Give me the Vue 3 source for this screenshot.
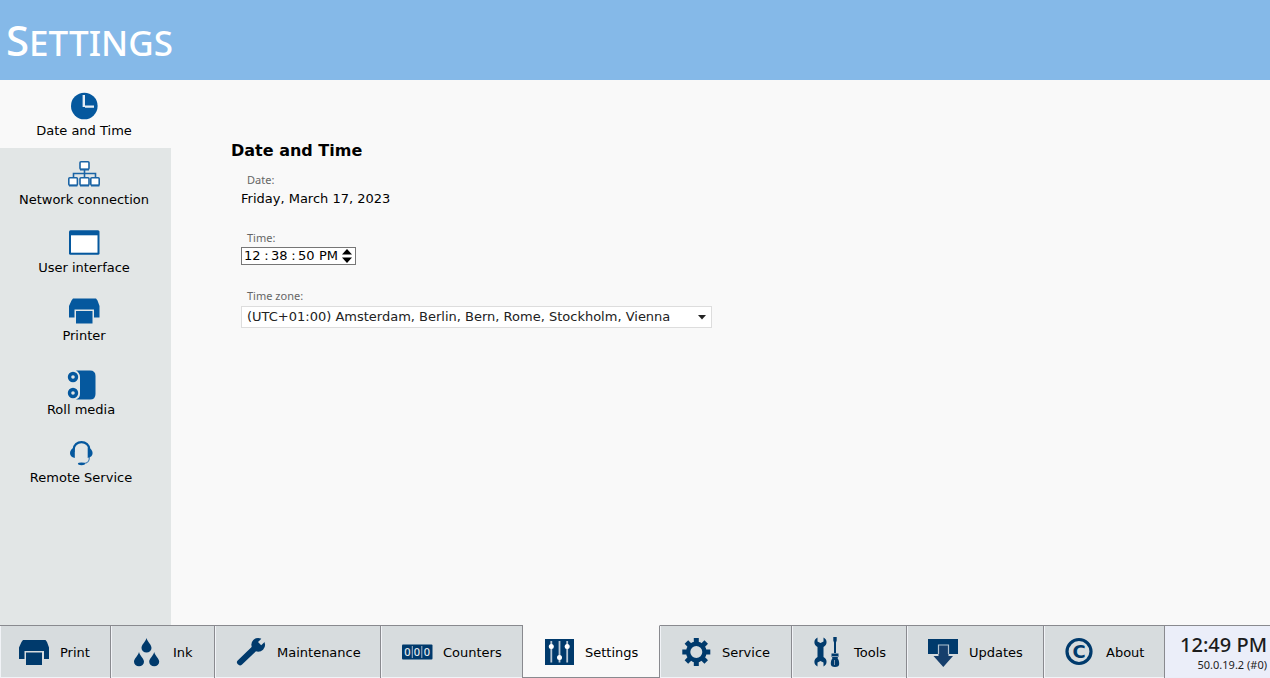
<script setup>
import { ref } from 'vue'

const hours = ref('12')
const minutes = ref('38')
const seconds = ref('50')
const period = ref('PM')
const zone = ref('(UTC+01:00) Amsterdam, Berlin, Bern, Rome, Stockholm, Vienna')

const tabs = ['Print', 'Ink', 'Maintenance', 'Counters', 'Settings', 'Service', 'Tools', 'Updates', 'About']
const active = ref('Settings')

const pages = [
  { name: 'Date and Time', group: 'general' },
  { name: 'Network connection', group: 'general' },
  { name: 'User interface', group: 'general' },
  { name: 'Printer', group: 'general' },
  { name: 'Roll media', group: 'extra' },
  { name: 'Remote Service', group: 'extra' }
]
const page = ref('Date and Time')

const teeth = [0, 45, 90, 135, 180, 225, 270, 315]
</script>

<template>
  <div class="app">
    <header class="banner"><h1>Settings</h1></header>

    <div class="body">
      <nav class="side" aria-label="Settings pages">
        <button
          v-for="p in pages"
          :key="p.name"
          type="button"
          class="side-item"
          :class="[p.group, { current: p.name === page }]"
          @click="page = p.name"
        >
          <svg class="icon" viewBox="0 0 32 32" aria-hidden="true">
            <g v-if="p.name === 'Date and Time'">
              <circle cx="16.3" cy="16" r="13.3" fill="#05589e" />
              <path d="M15.8 5v12M17 16.6h9" stroke="#e4edf5" stroke-width="2.4" fill="none" />
            </g>
            <g v-else-if="p.name === 'Network connection'" stroke="#1b64a5" stroke-width="1.6" fill="#fff">
              <path d="M16.5 10v9M5.500 19v-4.500h22v4.500" fill="none" />
              <rect x="12" y="2.700" width="9" height="7.600" rx="1" />
              <rect x="0.800" y="18.700" width="8.600" height="7.600" rx="1" />
              <rect x="12" y="18.700" width="9" height="7.600" rx="1" />
              <rect x="22.800" y="18.700" width="8.400" height="7.600" rx="1" />
              <path d="M12 10.600h9M1 26.700h8.400M12 26.700h9M23 26.700h8.400" stroke-width="1.800" />
            </g>
            <g v-else-if="p.name === 'User interface'">
              <rect x="1" y="3.300" width="30.500" height="24.400" rx="1.500" fill="#05589e" />
              <rect x="3" y="8.300" width="26.500" height="17.400" fill="#fff" />
            </g>
            <g v-else-if="p.name === 'Printer'" fill="#05589e">
              <path d="M5 3.500h23l1.500 2L31.500 11v11.500H26V14.500H6.500v8H1V11l2.500-5.500z" />
              <path d="M8 16h16.500v12.500H8z" />
            </g>
            <g v-else-if="p.name === 'Roll media'" fill="#05589e">
              <path d="M11 1.500h14q5.500 0 5.500 5.500v18q0 5.500-5.500 5.500H11q4-1.500 4-5.500V8q0-4-4-6.500z" />
              <circle cx="8" cy="8" r="3.500" fill="none" stroke="#05589e" stroke-width="3.400" />
              <circle cx="8" cy="24" r="3.500" fill="none" stroke="#05589e" stroke-width="3.400" />
            </g>
            <g v-else fill="#05589e">
              <path d="M8.500 15v-2C8.500 2.500 24.500 2.500 24.500 13v2" fill="none" stroke="#05589e" stroke-width="2.200" />
              <path d="M9.800 10.500v10.500C6.500 20.500 5 18.500 5 16s2-4.800 4.800-5.500zM22.700 10.500v10.500c3.300-.5 4.900-2.500 4.900-5s-2-4.800-4.900-5.500z" />
              <path d="M24.400 20c0 4.500-1.500 6.300-6 6.500" fill="none" stroke="#3f7db5" stroke-width="1.200" />
              <ellipse cx="16.500" cy="26.800" rx="3.600" ry="1.400" />
            </g>
          </svg>
          <span>{{ p.name }}</span>
        </button>
      </nav>

      <main class="content">
        <h2>Date and Time</h2>
        <div class="field">
          <span class="caption">Date:</span>
          <span class="value">Friday, March 17, 2023</span>
        </div>
        <div class="field">
          <label class="caption" for="hours">Time:</label>
          <div class="time">
            <input id="hours" v-model="hours" class="part" type="text" maxlength="2" />
            <span class="colon">:</span>
            <input v-model="minutes" class="part" type="text" maxlength="2" aria-label="Minutes" />
            <span class="colon">:</span>
            <input v-model="seconds" class="part" type="text" maxlength="2" aria-label="Seconds" />
            <input v-model="period" class="part period" type="text" maxlength="2" aria-label="AM or PM" />
            <span class="spin">
              <button type="button" aria-label="Later">
                <svg viewBox="0 0 10 6"><path d="M5 0l5 5.500H0z" /></svg>
              </button>
              <button type="button" aria-label="Earlier">
                <svg viewBox="0 0 10 6"><path d="M0 .5h10L5 6z" /></svg>
              </button>
            </span>
          </div>
        </div>
        <div class="field">
          <label class="caption" for="zone">Time zone:</label>
          <div class="zone">
            <select id="zone" v-model="zone">
              <option>(UTC+01:00) Amsterdam, Berlin, Bern, Rome, Stockholm, Vienna</option>
            </select>
            <svg class="caret" viewBox="0 0 8 5" aria-hidden="true"><path d="M0 0h8L4 4.500z" fill="#222" /></svg>
          </div>
        </div>
      </main>
    </div>

    <footer class="bar">
      <button
        v-for="t in tabs"
        :key="t"
        type="button"
        class="tab"
        :class="{ current: t === active }"
        @click="active = t"
      >
        <svg class="icon" viewBox="0 0 32 32" aria-hidden="true" fill="#003a6c">
          <g v-if="t === 'Print'">
            <path d="M5 4h22.500l1.500 2L31 11.500V23h-5V15H6.500v8H1V11.500L3.500 6z" />
            <path d="M8 16.500h16V29H8z" />
          </g>
          <g v-else-if="t === 'Ink'">
            <path d="M15.500 2C14.500 6 10.500 8.500 10.500 12a5 4.600 0 0 0 10 0C20.500 8.500 16.500 6 15.500 2z" />
            <path d="M8 16C7 20 3 22.500 3 25.700a5 4.600 0 0 0 10 0C13 22.500 9 20 8 16z" />
            <path d="M23.200 16c-1 4-5 6.500-5 9.700a5 4.600 0 0 0 10 0C28.200 22.500 24.200 20 23.200 16z" />
          </g>
          <g v-else-if="t === 'Maintenance'">
            <path d="M5 26.300L20 12" stroke="#003a6c" stroke-width="6" stroke-linecap="round" />
            <circle cx="23.200" cy="8.800" r="6.900" />
            <path d="M24.600 7.600L31.500 1" stroke="#d7dcde" stroke-width="4.600" />
          </g>
          <g v-else-if="t === 'Counters'">
            <rect x="1" y="8.500" width="30.500" height="15" rx="1" />
            <path d="M11.300 10v12M20.800 10v12" stroke="#a9bacb" stroke-width="1" />
            <g class="digits" fill="#e5ebf0" text-anchor="middle">
              <text x="6.500" y="19.500">0</text>
              <text x="16" y="19.500">0</text>
              <text x="25.800" y="19.500">0</text>
            </g>
          </g>
          <g v-else-if="t === 'Settings'">
            <rect x="2" y="3" width="29" height="26" />
            <path d="M8.300 5v21.500M16.500 5v21.500M24.200 5v21.500" stroke="#b8c7d5" stroke-width="1.800" />
            <g fill="#fff"><circle cx="8.300" cy="10.500" r="2.500" /><circle cx="16.500" cy="21.500" r="2.500" /><circle cx="24.200" cy="10.500" r="2.500" /></g>
          </g>
          <g v-else-if="t === 'Service'">
            <circle cx="16.300" cy="16" r="8.200" fill="none" stroke="#003a6c" stroke-width="4.400" />
            <rect v-for="a in teeth" :key="a" x="13.800" y="2" width="5" height="5" :transform="`rotate(${a} 16.300 16)`" />
          </g>
          <g v-else-if="t === 'Tools'">
            <path d="M5.500 1.500v4l3 1.500 3-1.500v-4c4.200 2 4 7.500 0 9.500v10c4 2 4.200 7.500 0 9.500v-4l-3-1.500-3 1.500v4c-4.200-2-4-7.500 0-9.500V11c-4-2-4.200-7.500 0-9.500z" />
            <path d="M21.300 1h3.400v3.500l-.7 2V17h-2V6.500l-.7-2z" />
            <path d="M19.500 17.500h7v3l-1 1.500c1.300 2 1.700 3.500 1.700 6 0 2-1.500 3-4.200 3s-4.200-1-4.200-3c0-2.500.4-4 1.700-6l-1-1.500z" />
            <path d="M20 20.500h6M22.500 24v5" stroke="#8098b0" stroke-width="1" />
          </g>
          <g v-else-if="t === 'Updates'">
            <rect x="1" y="3" width="30" height="15" />
            <path d="M11.500 9.500h10v10.500H26L16.300 31 6.500 20h5z" fill="#163f6c" />
            <path d="M11.500 18V9h10v9" fill="none" stroke="#b4c3d0" stroke-width="1.200" />
          </g>
          <g v-else>
            <circle cx="15" cy="15.500" r="12" fill="none" stroke="#003a6c" stroke-width="3.200" />
            <text class="copy" x="15" y="22" text-anchor="middle">C</text>
          </g>
        </svg>
        <span>{{ t }}</span>
      </button>
      <div class="status">
        <time>12:49 PM</time>
        <small>50.0.19.2 (#0)</small>
      </div>
    </footer>
  </div>
</template>

<style>
body {
  margin: 0;
}
</style>

<style scoped>
.app {
  display: flex;
  flex-direction: column;
  min-height: 100vh;
  background: #f9f9f9;
  color: #000;
  font: 13px/18px Verdana, "DejaVu Sans", sans-serif;
}
button,
input,
select {
  margin: 0;
  padding: 0;
  border: 0;
  background: none;
  color: inherit;
  font: inherit;
}
.icon {
  display: block;
  flex: none;
  width: 32px;
  height: 32px;
}
.banner {
  display: flex;
  align-items: center;
  height: 78px;
  padding: 2px 6px 0;
  background: #85b9e8;
  color: #fff;
}
h1 {
  margin: 0;
  font: 500 35px/48px "Noto Sans", sans-serif;
  text-transform: uppercase;
}
h1::first-letter {
  font-size: 42px;
}
.body {
  display: flex;
  flex: 1;
}
.side {
  display: flex;
  flex-direction: column;
  width: 171px;
  background: #e2e6e6;
}
.side-item {
  display: flex;
  flex-direction: column;
  align-items: center;
  height: 68px;
  padding: 10px 3px 0 0;
  white-space: nowrap;
}
.side-item.current {
  background: #f9f9f9;
  margin-bottom: 1px;
}
.side-item.extra {
  padding-right: 9px;
}
.general + .extra {
  margin-top: 6px;
}
.content {
  flex: 1;
  padding: 59px 60px 0;
}
h2 {
  margin: 0 0 10px;
  font-size: 16px;
  line-height: 24px;
}
.field {
  display: flex;
  flex-direction: column;
  align-items: flex-start;
  height: 58px;
  padding-left: 10px;
}
.caption {
  padding-left: 6px;
  color: #666;
  font: 11px/14px "Noto Sans", sans-serif;
}
.value {
  margin-top: 3px;
}
.time {
  display: flex;
  align-items: center;
  margin-top: 2px;
  padding: 0 3px 0 2px;
  border: 1px solid #767676;
  background: #fff;
}
.part {
  width: 18px;
  height: 16px;
}
.period {
  width: 21px;
  margin-left: 3px;
}
.colon {
  width: 9px;
  line-height: 16px;
  text-align: center;
}
.spin {
  display: flex;
  flex-direction: column;
  gap: 2px;
  margin-left: 2px;
}
.spin button,
.spin svg {
  display: block;
  width: 10px;
  height: 6px;
}
.zone {
  position: relative;
  margin-top: 3px;
}
select {
  appearance: none;
  display: block;
  height: 22px;
  padding: 0 40px 0 5px;
  border: 1px solid #ddd;
  background: #fff;
  color: #222;
}
.caret {
  position: absolute;
  top: 9px;
  right: 6px;
  width: 8px;
  height: 5px;
}
.bar {
  display: grid;
  grid-template-columns: 111fr 104fr 166fr 142fr 137fr 132fr 115fr 137fr 121fr 105fr;
  height: 53px;
}
.tab {
  display: flex;
  align-items: center;
  gap: 10px;
  padding: 0 0 0 20px;
  border-top: 1px solid #898a8f;
  border-right: 1px solid #898a8f;
  background: #d7dcde;
  box-shadow: inset 1px -1px #f1f3f7;
  white-space: nowrap;
}
.tab span {
  padding-top: 2px;
}
.tab:first-child {
  padding-left: 18px;
}
.tab.current {
  border-top-color: #f9f9f9;
  border-bottom: 1px solid #898a8f;
  background: #f9f9f9;
  box-shadow: none;
}
.digits {
  font: 500 11px "Noto Sans", sans-serif;
}
.copy {
  font: 700 18px "DejaVu Sans", sans-serif;
}
.status {
  display: flex;
  flex-direction: column;
  align-items: flex-end;
  padding: 6px 3px 0 0;
  border-top: 1px solid #898a8f;
  background: #ebeef9;
  color: #1c1c1c;
  font-family: "Noto Sans", sans-serif;
  white-space: nowrap;
}
.status time {
  font-size: 20px;
  font-weight: 500;
  line-height: 26px;
}
.status small {
  font-size: 11px;
  line-height: 14px;
}
</style>
